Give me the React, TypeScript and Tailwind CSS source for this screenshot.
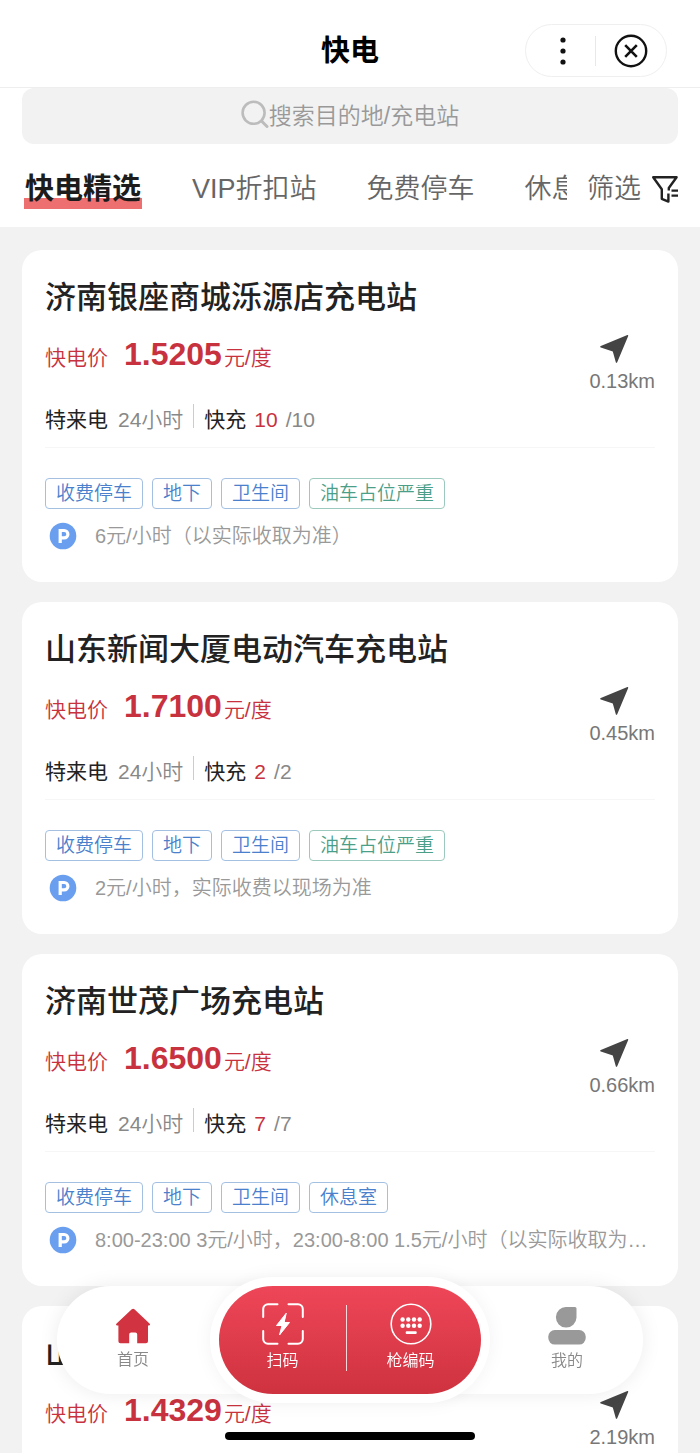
import { type ReactNode } from "react";

type Tag = { label: string; tone: "blue" | "green" };

type Station = {
  name: string;
  price: string;
  distance: string;
  free: number;
  total: number;
  tags: Tag[];
  parking: string;
};

const baseTags: Tag[] = [
  { label: "收费停车", tone: "blue" },
  { label: "地下", tone: "blue" },
  { label: "卫生间", tone: "blue" },
];

const stations: Station[] = [
  {
    name: "济南银座商城泺源店充电站",
    price: "1.5205",
    distance: "0.13km",
    free: 10,
    total: 10,
    tags: [...baseTags, { label: "油车占位严重", tone: "green" }],
    parking: "6元/小时（以实际收取为准）",
  },
  {
    name: "山东新闻大厦电动汽车充电站",
    price: "1.7100",
    distance: "0.45km",
    free: 2,
    total: 2,
    tags: [...baseTags, { label: "油车占位严重", tone: "green" }],
    parking: "2元/小时，实际收费以现场为准",
  },
  {
    name: "济南世茂广场充电站",
    price: "1.6500",
    distance: "0.66km",
    free: 7,
    total: 7,
    tags: [...baseTags, { label: "休息室", tone: "blue" }],
    parking: "8:00-23:00 3元/小时，23:00-8:00 1.5元/小时（以实际收取为准）",
  },
  {
    name: "山东大厦充电站",
    price: "1.4329",
    distance: "2.19km",
    free: 4,
    total: 4,
    tags: baseTags,
    parking: "5元/小时（以实际收取为准）",
  },
];

const tabs = ["快电精选", "VIP折扣站", "免费停车", "休息室"];

/* ---------- icons ---------- */

function SearchIcon() {
  return (
    <svg viewBox="0 0 28 28" className="size-7 text-[#bcbcbc]" fill="none" stroke="currentColor" aria-hidden="true">
      <circle cx="12.6" cy="12.8" r="11" strokeWidth="2.6" />
      <path d="M20.5 21l5.5 5.5" strokeWidth="3" strokeLinecap="round" />
    </svg>
  );
}

function FilterIcon() {
  return (
    <svg viewBox="0 0 28 28" className="size-7 text-[#222]" fill="none" stroke="currentColor" strokeWidth="2.4" aria-hidden="true">
      <path d="M17.4 18.500V26.600l-6.600-2.800v-9.600L2.200 2.200H25.600L17.800 13v2.500" strokeLinejoin="round" />
      <path d="M20.5 15.6h6.5M20.5 20.6h6.5" />
    </svg>
  );
}

function ArrowIcon() {
  return (
    <svg viewBox="0 0 30 30" className="size-[30px] text-[#444]" fill="currentColor" aria-hidden="true">
      <path d="M28.400 1.100c.6-.2 1 .2.800.8L18.200 28.200c-.3.800-1.200.800-1.400 0l-3-10.600-12-4.200c-.8-.3-.8-1.200 0-1.500z" />
    </svg>
  );
}

function ParkingIcon() {
  return (
    <svg viewBox="0 0 28 28" className="size-7 shrink-0" aria-hidden="true">
      <circle cx="14" cy="14" r="13.3" fill="#6a9fef" />
      <path d="M11.200 21V8.500h4a3.700 3.700 0 0 1 0 7.400h-4" fill="none" stroke="#fff" strokeWidth="3.200" />
    </svg>
  );
}

function HomeIcon() {
  return (
    <svg viewBox="0 0 36 36" className="size-9 text-[#d13440]" fill="currentColor" aria-hidden="true">
      <path d="M16.800 1.300a2 2 0 0 1 2.600 0L34.500 15.400c1 1 .6 2-.6 2H33v15.800a2 2 0 0 1-2 2h-8.800V26.600a2 2 0 0 0-2-2h-4a2 2 0 0 0-2 2v8.600H5.400a2 2 0 0 1-2-2V17.400H2.200c-1.200 0-1.600-1-.6-2z" />
    </svg>
  );
}

function ScanIcon() {
  return (
    <svg viewBox="0 0 42 42" className="size-[42px]" fill="none" stroke="currentColor" strokeWidth="2" strokeLinecap="round" aria-hidden="true">
      <path d="M1.200 14V6a4.800 4.800 0 0 1 4.800-4.800h9.500M26.500 1.200H36A4.800 4.800 0 0 1 40.800 6v8M40.800 28v8a4.800 4.800 0 0 1-4.800 4.800h-9.500M15.500 40.800H6A4.800 4.800 0 0 1 1.200 36v-8" />
      <path d="M24 10.500L14.500 22.500h5.500l-2.500 9.500L27.500 19.500H22.500z" fill="currentColor" strokeWidth="1" strokeLinejoin="round" />
    </svg>
  );
}

function KeypadIcon() {
  return (
    <svg viewBox="0 0 42 42" className="size-[42px]" fill="currentColor" aria-hidden="true">
      <circle cx="21" cy="21" r="19.800" fill="none" stroke="currentColor" strokeWidth="1.600" />
      {[16.500, 22.700].map((y) => [12.600, 18.300, 24, 29.700].map((x) => <circle key={`${x}-${y}`} cx={x} cy={y} r="2.200" />))}
      <rect x="15.700" y="28.200" width="11" height="2.800" rx="1" />
    </svg>
  );
}

function UserIcon() {
  return (
    <svg viewBox="0 0 38 38" className="size-[38px] text-[#999]" fill="currentColor" aria-hidden="true">
      <path d="M18.500 0H27a1.500 1.500 0 0 1 1.500 1.500V10.500a10.300 10.300 0 1 1-10-10.500z" />
      <rect x="0.300" y="23" width="37.400" height="14.600" rx="6.500" />
    </svg>
  );
}

/* ---------- pieces ---------- */

function Header() {
  return (
    <header className="grid shrink-0 grid-cols-[1fr_auto_1fr] items-center border-b border-[#eee] bg-white px-[33px] pt-6 pb-2.5">
      <h1 className="col-start-2 text-[29px] leading-[40px] font-bold text-black">快电</h1>
      <div className="flex h-[53px] w-[142px] items-center justify-self-end rounded-full border border-[#efefef]">
        <button type="button" aria-label="更多" className="flex w-[69px] justify-center pl-1">
          <svg viewBox="0 0 6 28" className="h-7 w-1.5" fill="#111" aria-hidden="true">
            <circle cx="3" cy="3" r="2.600" />
            <circle cx="3" cy="14" r="2.600" />
            <circle cx="3" cy="25" r="2.600" />
          </svg>
        </button>
        <span className="h-[30px] w-px bg-[#e8e8e8]" />
        <button type="button" aria-label="关闭" className="flex flex-1 justify-center">
          <svg viewBox="0 0 34 34" className="size-[34px]" fill="none" stroke="#111" strokeWidth="2.400" aria-hidden="true">
            <circle cx="17" cy="17" r="15.200" />
            <path d="M11.200 11.200l11.600 11.600M22.800 11.200L11.200 22.800" strokeWidth="2.600" />
          </svg>
        </button>
      </div>
    </header>
  );
}

function SearchBar() {
  return (
    <label className="mx-[22px] flex h-14 items-center justify-center rounded-xl bg-[#f2f2f2] pb-1">
      <SearchIcon />
      <input
        type="search"
        aria-label="搜索目的地/充电站"
        placeholder="搜索目的地/充电站"
        className="field-sizing-content bg-transparent text-[23px] leading-8 font-[350] text-[#333] outline-none placeholder:text-[#999]"
      />
    </label>
  );
}

function FilterTabs() {
  return (
    <div className="flex h-[83px] items-center pt-1.5 pr-[21px] pl-6">
      <nav className="flex min-w-0 flex-1 items-center gap-[50px] overflow-hidden whitespace-nowrap">
        {tabs.map((tab, i) =>
          i === 0 ? (
            <button
              key={tab}
              type="button"
              className="shrink-0 bg-linear-to-t from-[#ee6f70] from-[11px] to-transparent to-[11px] px-px text-[29px] leading-[40px] font-bold text-[#1c1c1c]"
            >
              {tab}
            </button>
          ) : (
            <button key={tab} type="button" className="shrink-0 text-[27px] leading-[40px] font-[350] text-[#666]">
              {tab}
            </button>
          ),
        )}
      </nav>
      <button type="button" className="ml-5 flex items-center gap-2.5 text-[27px] leading-[40px] font-[350] text-[#666]">
        筛选
        <FilterIcon />
      </button>
    </div>
  );
}

function TagBadge({ tag }: { tag: Tag }) {
  const tone = tag.tone === "green" ? "border-[#9cc9bd] text-[#4b9f88]" : "border-[#a3c0e2] text-[#4a80cc]";
  return <li className={`rounded border px-[10px] text-[19px] leading-[29px] font-[350] ${tone}`}>{tag.label}</li>;
}

function StationCard({ station }: { station: Station }) {
  return (
    <article className="h-[332px] shrink-0 rounded-[20px] bg-white px-[23px] pt-[25px]">
      <h2 className="text-[31px] leading-[46px] font-medium text-[#222]">{station.name}</h2>
      <div className="flex items-start justify-between">
        <div>
          <p className="mt-[11px] flex items-baseline text-[21px] leading-[44px] text-[#c8323f]">
            <span className="mr-4 font-[350]">快电价</span>
            <strong className="mr-0.5 text-[32px] font-bold">{station.price}</strong>
            <span className="font-[350]">元/度</span>
          </p>
          <p className="mt-6 flex items-center text-[21px] leading-[32px] text-[#888]">
            <span className="mr-2.5 text-[#222]">特来电</span>
            <span className="font-[350]">24小时</span>
            <span className="mx-2.5 mb-2 h-6 w-px bg-[#ccc]" />
            <span className="mr-2 text-[#222]">快充</span>
            <span className="mr-2 text-[#c8323f]">{station.free}</span>
            <span>/{station.total}</span>
          </p>
        </div>
        <a href="#navigate" className="flex flex-col pt-[13px] text-xl leading-[34px] text-[#777]">
          <span className="pl-2.5">
            <ArrowIcon />
          </span>
          {station.distance}
        </a>
      </div>
      <ul className="mt-[11px] flex gap-[9px] border-t border-[#f6f6f6] pt-[30px]">
        {station.tags.map((tag) => (
          <TagBadge key={tag.label} tag={tag} />
        ))}
      </ul>
      <p className="mt-3 flex items-center gap-[18px] pl-1 text-xl leading-[30px] font-[350] text-[#999]">
        <ParkingIcon />
        <span className="truncate">{station.parking}</span>
      </p>
    </article>
  );
}

function NavItem({ label, children }: { label: string; children: ReactNode }) {
  return (
    <a href="#nav" className="flex flex-1 flex-col items-center gap-1 text-base leading-6 font-[350]">
      {children}
      {label}
    </a>
  );
}

function BottomNav() {
  return (
    <div className="fixed inset-x-0 bottom-0 flex flex-col items-center gap-[38px] px-[57px] pb-[13px]">
      <nav className="flex h-[108px] w-full items-center rounded-full bg-white text-[#888] shadow-[0_0_20px_rgba(0,0,0,0.08)]">
        <div className="flex flex-1 pr-2.5">
          <NavItem label="首页">
            <HomeIcon />
          </NavItem>
        </div>
        <div className="flex h-full w-[262px] items-center rounded-full bg-linear-to-b from-[#ee4658] to-[#cf323f] pr-[7px] pb-1 text-white shadow-[0_0_0_9px_#fff,0_0_20px_8px_rgba(0,0,0,0.06)]">
          <NavItem label="扫码">
            <ScanIcon />
          </NavItem>
          <span className="h-[66px] w-px bg-white/80" />
          <NavItem label="枪编码">
            <KeypadIcon />
          </NavItem>
        </div>
        <div className="flex flex-1 pl-2.5">
          <NavItem label="我的">
            <UserIcon />
          </NavItem>
        </div>
      </nav>
      <div className="h-2 w-[250px] rounded-full bg-black" />
    </div>
  );
}

export default function App() {
  return (
    <div className="flex h-screen flex-col overflow-hidden bg-[#f2f2f2] font-['Liberation_Sans','Noto_Sans_CJK_SC',sans-serif]">
      <Header />
      <div className="shrink-0 bg-white">
        <SearchBar />
        <FilterTabs />
      </div>
      <main className="flex min-h-0 flex-1 flex-col gap-5 overflow-y-auto px-[22px] pt-[23px] [scrollbar-width:none]">
        {stations.map((station) => (
          <StationCard key={station.name} station={station} />
        ))}
      </main>
      <BottomNav />
    </div>
  );
}
